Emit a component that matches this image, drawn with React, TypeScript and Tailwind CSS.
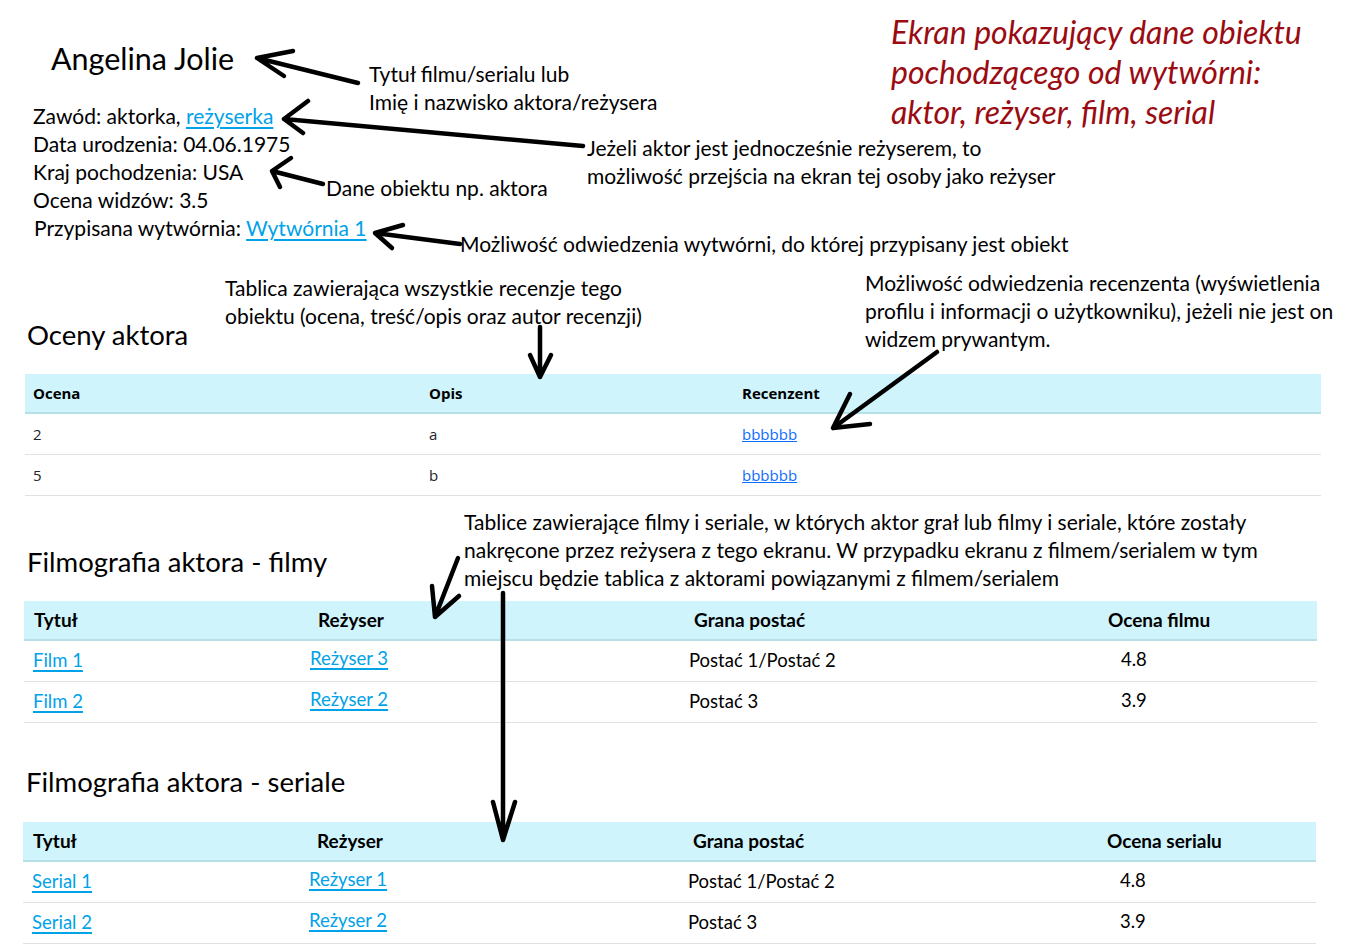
import React from "react";

const cal = "font-['Lato','Liberation_Sans',sans-serif]";
const seg = "font-['Open_Sans','Noto_Sans',sans-serif]";

const link = "text-[#00a2e8] underline underline-offset-[3px] decoration-[1.5px]";

function Arrows() {
  const arrows = [
    "M358 83 L257 58 M293 51 L257 58 L284 76",
    "M583 146 L284 119 M308 101 L284 119 L303 133",
    "M323 184 L272 171 M291 158 L272 171 L280 187",
    "M460 244 L375 233 M403 225 L375 233 L392 248",
    "M540 327 L540 377 M530 355 L540 377 L551 355",
    "M937 352 L833 428 M850 394 L833 428 L870 424",
    "M458 558 L435 617 M432 586 L435 617 L459 596",
    "M503 593 L503 840 M493 802 L503 840 L515 802",
  ];
  return (
    <svg className="absolute inset-0 pointer-events-none" width="1355" height="952" viewBox="0 0 1355 952">
      {arrows.map((d, i) => (
        <path key={i} d={d} fill="none" stroke="black" strokeWidth="4.5" strokeLinecap="round" strokeLinejoin="round" />
      ))}
    </svg>
  );
}

function Note({ x, y, lines }: { x: number; y: number; lines: string[] }) {
  return (
    <div className={`absolute ${cal} text-[21px] leading-[28px] text-black whitespace-nowrap`} style={{ left: x, top: y }}>
      {lines.map((l, i) => (
        <div key={i}>{l}</div>
      ))}
    </div>
  );
}

function ReviewsTable() {
  const rows = [
    ["2", "a", "bbbbbb"],
    ["5", "b", "bbbbbb"],
  ];
  return (
    <div className={`ml-[25px] w-[1296px] ${seg} text-[15px] text-[#212529]`}>
      <div className="grid grid-cols-[396px_313px_1fr] h-[40px] items-center bg-[#cff4fc] border-b-2 border-[#b6dfe8] font-bold text-black">
        <div className="pl-2">Ocena</div>
        <div className="pl-2">Opis</div>
        <div className="pl-2">Recenzent</div>
      </div>
      {rows.map((r, i) => (
        <div key={i} className="grid grid-cols-[396px_313px_1fr] h-[41px] items-center border-b border-[#dee2e6]">
          <div className="pl-2">{r[0]}</div>
          <div className="pl-2">{r[1]}</div>
          <div className="pl-2">
            <a className="text-[#0d6efd] underline">{r[2]}</a>
          </div>
        </div>
      ))}
    </div>
  );
}

type FilmRow = { title: string; dir: string; role: string; rate: string };

function FilmTable({ left, rateLabel, rows }: { left: string; rateLabel: string; rows: FilmRow[] }) {
  return (
    <div className={`${left} w-[1293px] ${cal} text-[18.5px] text-black`}>
      <div className="grid grid-cols-[276px_380px_415px_1fr] h-[40px] items-center bg-[#cff4fc] border-b-2 border-[#b6dfe8] font-bold text-[19px]">
        <div className="pl-[10px]">Tytuł</div>
        <div className="pl-[18px]">Reżyser</div>
        <div className="pl-[14px]">Grana postać</div>
        <div className="pl-[13px]">{rateLabel}</div>
      </div>
      {rows.map((r, i) => (
        <div key={i} className="grid grid-cols-[276px_380px_415px_1fr] h-[41px] items-center border-b border-[#dee2e6]">
          <div className="pl-[9px]">
            <a className={link}>{r.title}</a>
          </div>
          <div className="pl-[10px] -mt-[4px]">
            <a className={link}>{r.dir}</a>
          </div>
          <div className="pl-[9px]">{r.role}</div>
          <div className="pl-[26px] -mt-[2px]">{r.rate}</div>
        </div>
      ))}
    </div>
  );
}

export default function App() {
  return (
    <div className="relative w-[1355px] h-[952px] overflow-hidden bg-white text-black">
      <div className="flex flex-col">
        <h1 className={`pt-[40px] pl-[51px] ${cal} text-[30.5px] leading-[36px]`}>Angelina Jolie</h1>

        <div className={`mt-[26px] pl-[33px] ${cal} text-[21px] leading-[28px]`}>
          <div>
            Zawód: aktorka, <a className={link}>reżyserka</a>
          </div>
          <div>Data urodzenia: 04.06.1975</div>
          <div>Kraj pochodzenia: USA</div>
          <div>Ocena widzów: 3.5</div>
          <div className="pl-px">
            Przypisana wytwórnia: <a className={link}>Wytwórnia 1</a>
          </div>
        </div>

        <h2 className={`mt-[77px] pl-[27px] ${cal} text-[27.5px] leading-[32px]`}>Oceny aktora</h2>
        <div className="mt-[23px]">
          <ReviewsTable />
        </div>

        <h2 className={`mt-[50px] pl-[27px] ${cal} text-[27.5px] leading-[32px]`}>Filmografia aktora - filmy</h2>
        <div className="mt-[23px]">
          <FilmTable
            left="ml-[24px]"
            rateLabel="Ocena filmu"
            rows={[
              { title: "Film 1", dir: "Reżyser 3", role: "Postać 1/Postać 2", rate: "4.8" },
              { title: "Film 2", dir: "Reżyser 2", role: "Postać 3", rate: "3.9" },
            ]}
          />
        </div>

        <h2 className={`mt-[43px] pl-[26px] ${cal} text-[27.5px] leading-[32px]`}>Filmografia aktora - seriale</h2>
        <div className="mt-[24px]">
          <FilmTable
            left="ml-[23px]"
            rateLabel="Ocena serialu"
            rows={[
              { title: "Serial 1", dir: "Reżyser 1", role: "Postać 1/Postać 2", rate: "4.8" },
              { title: "Serial 2", dir: "Reżyser 2", role: "Postać 3", rate: "3.9" },
            ]}
          />
        </div>
      </div>

      <div className={`absolute left-[891px] top-[12px] ${cal} italic text-[32px] leading-[40px] text-[#9a0b12] whitespace-nowrap`}>
        <div>Ekran pokazujący dane obiektu</div>
        <div>pochodzącego od wytwórni:</div>
        <div>aktor, reżyser, film, serial</div>
      </div>

      <Note x={369} y={60} lines={["Tytuł filmu/serialu lub", "Imię i nazwisko aktora/reżysera"]} />
      <Note x={587} y={134} lines={["Jeżeli aktor jest jednocześnie reżyserem, to", "możliwość przejścia na ekran tej osoby jako reżyser"]} />
      <Note x={326} y={174} lines={["Dane obiektu np. aktora"]} />
      <Note x={460} y={230} lines={["Możliwość odwiedzenia wytwórni, do której przypisany jest obiekt"]} />
      <Note x={225} y={274} lines={["Tablica zawierająca wszystkie recenzje tego", "obiektu (ocena, treść/opis oraz autor recenzji)"]} />
      <Note
        x={865}
        y={269}
        lines={["Możliwość odwiedzenia recenzenta (wyświetlenia", "profilu i informacji o użytkowniku), jeżeli nie jest on", "widzem prywantym."]}
      />
      <Note
        x={464}
        y={508}
        lines={[
          "Tablice zawierające filmy i seriale, w których aktor grał lub filmy i seriale, które zostały",
          "nakręcone przez reżysera z tego ekranu. W przypadku ekranu z filmem/serialem w tym",
          "miejscu będzie tablica z aktorami powiązanymi z filmem/serialem",
        ]}
      />

      <Arrows />
    </div>
  );
}
